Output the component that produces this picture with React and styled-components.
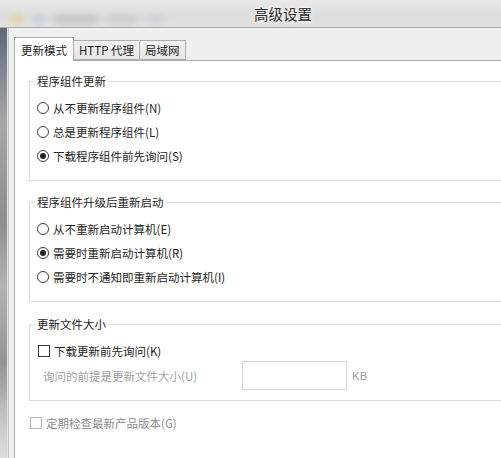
import React from "react";
import styled, { createGlobalStyle } from "styled-components";

const GlobalStyle = createGlobalStyle`
  html, body {
    margin: 0;
    padding: 0;
    overflow: hidden;
  }
  body {
    font-family: "Noto Sans CJK SC", "Liberation Sans", sans-serif;
    color: #1e1e1e;
  }
`;

const Screen = styled.div`
  width: 501px;
  height: 458px;
  display: flex;
  flex-direction: column;
  background: #f0f0f0;
  overflow: hidden;
`;

const TitleBar = styled.div`
  height: 27px;
  flex: none;
  display: flex;
  align-items: center;
  background: linear-gradient(to bottom, #e9e9e9 0%, #dcdcdc 60%, #e2e2e2 100%);
  border-bottom: 1px solid #a9a9a9;
  overflow: hidden;
`;

const Backdrop = styled.div`
  width: 254px;
  height: 27px;
  flex: none;
  display: flex;
  align-items: center;
  gap: 10px;
  padding-left: 10px;
  box-sizing: border-box;
  filter: blur(4px);
  opacity: 0.55;
`;

const Blob = styled.div`
  width: ${p => p.w}px;
  height: ${p => p.h}px;
  margin-top: 12px;
  background: ${p => p.c};
  border-radius: 3px;
`;

const Title = styled.div`
  font-size: 14.5px;
  line-height: 18px;
  color: #2a2a2a;
  text-shadow: 0 0 6px #ffffff, 0 0 3px #ffffff;
  margin-top: 1px;
`;

const Main = styled.div`
  flex: 1;
  display: flex;
  min-height: 0;
`;

const Strip = styled.div`
  width: 7px;
  flex: none;
  background: linear-gradient(to bottom, #5d6672 0%, #7f8791 10%, #a7a7a7 22%, #8e8e8e 45%, #b3b3b3 60%, #949494 78%, #c9c9c9 92%, #dcdcdc 100%);
  border-right: 1px solid #e4e4e4;
`;

const Dialog = styled.div`
  flex: 1;
  display: flex;
  flex-direction: column;
  border-left: 1px solid #c4c4c4;
  padding: 9px 0 0 5px;
  background: #f0f0f0;
  min-width: 0;
`;

const Tabs = styled.div`
  display: flex;
  align-items: flex-end;
  height: 24px;
  margin-bottom: -1px;
  position: relative;
  z-index: 1;
`;

const Tab = styled.div`
  height: ${p => (p.active ? 24 : 20)}px;
  box-sizing: border-box;
  padding: 0 ${p => (p.active ? 6 : 5)}px;
  margin-left: ${p => (p.active ? 0 : -1)}px;
  display: flex;
  align-items: center;
  font-size: 11.5px;
  color: #1e1e1e;
  border: 1px solid #acacac;
  border-bottom: ${p => (p.active ? "none" : "1px solid #acacac")};
  background: ${p => (p.active ? "#ffffff" : "linear-gradient(to bottom, #f2f2f2, #e6e6e6)")};
  margin-bottom: ${p => (p.active ? 0 : 1)}px;
`;

const Panel = styled.div`
  flex: 1;
  background: #ffffff;
  border: 1px solid #acacac;
  border-right: none;
  border-bottom: none;
  padding: 12px 0 0 14px;
  overflow: hidden;
`;

const Group = styled.fieldset`
  margin: ${p => p.gap || 0}px -20px 0 0;
  padding: 7px 0 ${p => p.pb || 12}px 7px;
  border: 1px solid #dcdcdc;
  border-right: none;
  min-width: 0;
`;

const Legend = styled.legend`
  font-size: 11.5px;
  line-height: 16px;
  padding: 0 2px;
  margin-left: -2px;
  color: #1e1e1e;
`;

const Row = styled.label`
  height: 24px;
  display: flex;
  align-items: center;
  gap: 4px;
  font-size: 11.5px;
  color: ${p => (p.dim ? "#8c8c8c" : "#1e1e1e")};
  padding-left: ${p => p.indent || 0}px;
  margin-top: ${p => p.top || 0}px;
`;

const Radio = styled.span`
  width: 12px;
  height: 12px;
  box-sizing: border-box;
  border-radius: 50%;
  border: 1px solid #3c3c3c;
  background: #ffffff;
  display: flex;
  align-items: center;
  justify-content: center;

  &::after {
    content: "";
    width: 6px;
    height: 6px;
    border-radius: 50%;
    background: ${p => (p.checked ? "#262626" : "transparent")};
  }
`;

const Box = styled.span`
  width: 12px;
  height: 12px;
  box-sizing: border-box;
  border: 1px solid ${p => (p.dim ? "#b8b8b8" : "#3c3c3c")};
  background: #ffffff;
`;

const SizeRow = styled.div`
  height: 29px;
  margin-top: -2px;
  display: flex;
  align-items: center;
  padding-left: 6px;
  font-size: 11.5px;
  color: #a3a3a3;
`;

const SizeInput = styled.div`
  width: 105px;
  height: 29px;
  box-sizing: border-box;
  border: 1px solid #d6d6d6;
  background: #ffffff;
  margin-left: 45px;
`;

const Unit = styled.span`
  margin-left: 5px;
  font-family: "Liberation Sans", sans-serif;
  font-size: 11.5px;
  color: #9a9a9a;
`;

const options1 = [
  { label: "从不更新程序组件(N)", checked: false },
  { label: "总是更新程序组件(L)", checked: false },
  { label: "下载程序组件前先询问(S)", checked: true },
];

const options2 = [
  { label: "从不重新启动计算机(E)", checked: false },
  { label: "需要时重新启动计算机(R)", checked: true },
  { label: "需要时不通知即重新启动计算机(I)", checked: false },
];

export default function App() {
  return (
    <Screen>
      <GlobalStyle />
      <TitleBar>
        <Backdrop>
          <Blob w={14} h={9} c="#e8c86a" />
          <Blob w={10} h={8} c="#8fb3d9" />
          <Blob w={44} h={6} c="#9a9a9a" />
          <Blob w={30} h={6} c="#b0b0b0" />
          <Blob w={16} h={6} c="#a8b8cc" />
        </Backdrop>
        <Title>高级设置</Title>
      </TitleBar>
      <Main>
        <Strip />
        <Dialog>
          <Tabs>
            <Tab active>更新模式</Tab>
            <Tab>HTTP 代理</Tab>
            <Tab>局域网</Tab>
          </Tabs>
          <Panel>
            <Group>
              <Legend>程序组件更新</Legend>
              {options1.map(o => (
                <Row key={o.label}>
                  <Radio checked={o.checked} />
                  {o.label}
                </Row>
              ))}
            </Group>
            <Group gap={13}>
              <Legend>程序组件升级后重新启动</Legend>
              {options2.map(o => (
                <Row key={o.label}>
                  <Radio checked={o.checked} />
                  {o.label}
                </Row>
              ))}
            </Group>
            <Group gap={14} pb={10}>
              <Legend>更新文件大小</Legend>
              <Row indent={1}>
                <Box />
                下载更新前先询问(K)
              </Row>
              <SizeRow>
                询问的前提是更新文件大小(U)
                <SizeInput />
                <Unit>KB</Unit>
              </SizeRow>
            </Group>
            <Row dim indent={1} top={10}>
              <Box dim />
              定期检查最新产品版本(G)
            </Row>
          </Panel>
        </Dialog>
      </Main>
    </Screen>
  );
}
